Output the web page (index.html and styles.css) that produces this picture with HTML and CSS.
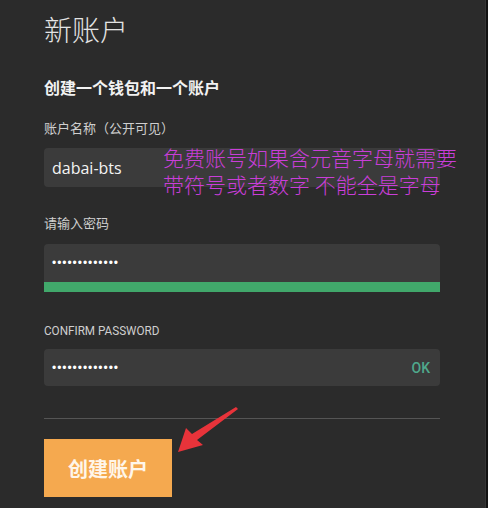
FILE: index.html
```html
<!DOCTYPE html>
<html lang="zh-CN">
<head>
<meta charset="utf-8">
<title>新账户</title>
<link rel="stylesheet" href="styles.css">
</head>
<body>
<div class="page">
  <main class="screen">
    <h1 class="title">新账户</h1>
    <h2 class="subtitle">创建一个钱包和一个账户</h2>

    <div class="field field-name">
      <div class="label">账户名称（公开可见）</div>
      <div class="input"><span class="value">dabai-bts</span></div>
    </div>

    <div class="field field-pass">
      <div class="label">请输入密码</div>
      <div class="input input-strength"><span class="dots">•••••••••••••</span></div>
      <div class="strength"></div>
    </div>

    <div class="field field-confirm">
      <div class="label label-caps"><span class="caps-text">CONFIRM PASSWORD</span></div>
      <div class="input input-ok"><span class="dots">•••••••••••••</span><span class="ok">OK</span></div>
    </div>

    <div class="divider"></div>

    <button class="btn" type="button">创建账户</button>

    <div class="note">
      <div>免费账号如果含元音字母就需要</div>
      <div>带符号或者数字 不能全是字母</div>
    </div>

    <svg class="arrow" width="70" height="56" viewBox="0 0 70 56" xmlns="http://www.w3.org/2000/svg">
      <polygon points="3,49 11,25 17,31 61,4 63,6 22,37 28,42" fill="#e8333a"/>
    </svg>
  </main>
  <div class="edge"></div>
</div>
</body>
</html>
```

FILE: styles.css
```css
html, body {
  margin: 0;
  padding: 0;
  background: #2b2b2b;
}

.page {
  display: flex;
  width: 488px;
  height: 508px;
  overflow: hidden;
}

.screen {
  position: relative;
  flex: 1;
  padding: 12px 0 0 44px;
  box-sizing: border-box;
  font-family: "Noto Sans CJK SC", "Noto Sans", sans-serif;
  color: #e6e6e6;
}

.edge {
  width: 2px;
  border-left: 1px solid #353535;
  background: #121212;
}

.title {
  margin: 0;
  font-size: 28px;
  line-height: 34px;
  font-weight: 300;
  color: #e4e4e4;
}

.subtitle {
  margin: 30px 0 0;
  font-size: 16px;
  line-height: 22px;
  font-weight: 700;
  color: #f2f2f2;
}

.field {
  width: 396px;
}

.field-name { margin-top: 21px; }
.field-pass { margin-top: 27px; }
.field-confirm { margin-top: 31px; }

.label {
  font-size: 13px;
  line-height: 17px;
  color: #cfcfcf;
  margin-bottom: 12px;
}

.field-pass .label { margin-bottom: 13px; }

.label-caps {
  font-family: Roboto, "Liberation Sans", sans-serif;
  font-size: 13px;
  line-height: 16px;
  margin-bottom: 10px;
}

.caps-text {
  display: inline-block;
  transform: scaleX(0.9);
  transform-origin: left center;
}

.input {
  display: flex;
  align-items: center;
  justify-content: space-between;
  height: 39px;
  padding: 0 10px 0 8px;
  box-sizing: border-box;
  background: #3b3b3b;
  border-radius: 4px;
}

.input-strength {
  height: 38px;
  border-radius: 4px 4px 0 0;
}

.input-ok {
  height: 37px;
}

.value {
  font-family: "Open Sans", Roboto, sans-serif;
  font-size: 16px;
  color: #f4f4f4;
}

.dots {
  font-family: "Liberation Sans", sans-serif;
  font-size: 12px;
  letter-spacing: 0.95px;
  color: #ffffff;
}

.ok {
  font-family: Roboto, sans-serif;
  font-size: 14px;
  font-weight: 500;
  color: #4fa98c;
}

.strength {
  height: 10px;
  background: #41a86b;
}

.divider {
  width: 396px;
  height: 1px;
  margin-top: 32px;
  background: #555555;
}

.btn {
  display: block;
  margin-top: 20px;
  width: 128px;
  height: 58px;
  padding: 0;
  border: 0;
  background: #f5a94f;
  font-family: "Noto Sans CJK SC", sans-serif;
  font-size: 20px;
  font-weight: 700;
  color: #fff6ea;
}

.note {
  position: absolute;
  left: 163px;
  top: 144px;
  font-size: 21px;
  line-height: 27px;
  font-weight: 300;
  color: #c93ed8;
  white-space: nowrap;
}

.arrow {
  position: absolute;
  left: 175px;
  top: 403px;
}
```
